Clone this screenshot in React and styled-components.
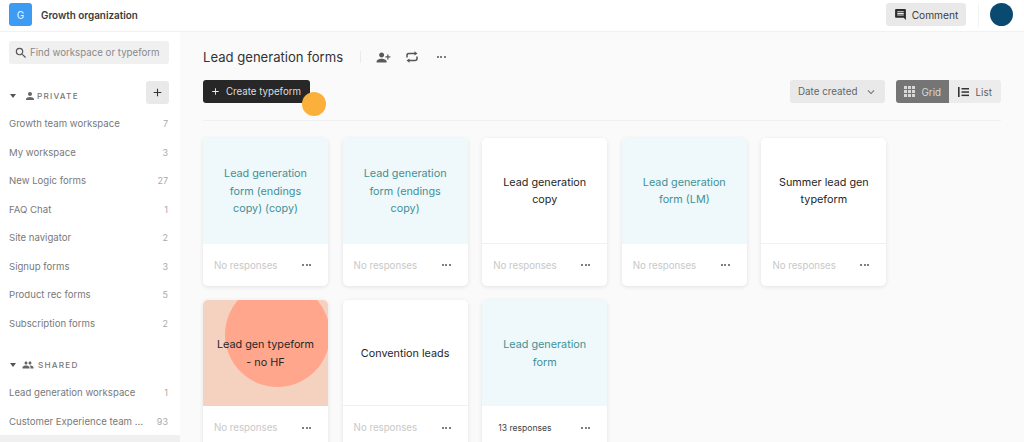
import React from "react";
import styled, { createGlobalStyle } from "styled-components";
import { MdComment, MdPerson, MdPeople, MdPersonAdd, MdSearch, MdAdd, MdKeyboardArrowDown } from "react-icons/md";

const Global = createGlobalStyle`
  html, body { margin: 0; padding: 0; height: 442px; overflow: hidden; background: #fafafa; }
  body { font-family: Inter, "Liberation Sans", sans-serif; color: #262626; }
  * { box-sizing: border-box; }
`;

const Page = styled.div`
  width: 1024px;
  height: 442px;
  overflow: hidden;
  position: relative;
  display: flex;
  flex-direction: column;
`;

const Header = styled.header`
  height: 32px;
  flex: none;
  background: #fff;
  border-bottom: 1px solid #f1f1f1;
  display: flex;
  align-items: center;
  padding: 0 11px 2px 9px;
`;

const Logo = styled.div`
  width: 23px;
  height: 23px;
  border-radius: 3px;
  background: #3d9bf3;
  color: #dcefff;
  font-size: 10px;
  font-weight: 500;
  display: flex;
  align-items: center;
  justify-content: center;
`;

const OrgName = styled.div`
  margin-left: 9px;
  font-size: 9.9px;
  font-weight: 600;
  color: #3a3a3a;
  flex: 1;
`;

const CommentButton = styled.button`
  width: 80px;
  height: 23px;
  border: none;
  border-radius: 3px;
  background: #e9e9e9;
  color: #3d3d3d;
  font: 400 10.2px Inter, sans-serif;
  display: flex;
  align-items: center;
  justify-content: center;
  gap: 5px;
  svg { font-size: 13px; color: #2b2b2b; }
`;

const VSep = styled.div`
  width: 1px;
  height: 24px;
  background: #f3f3f3;
  margin: 0 11px 0 12px;
`;

const Avatar = styled.div`
  width: 23px;
  height: 23px;
  border-radius: 50%;
  background: #0b4a70;
`;

const Body = styled.div`
  flex: 1;
  display: flex;
  min-height: 0;
`;

const Sidebar = styled.aside`
  width: 180px;
  flex: none;
  background: #fff;
  padding: 9px 0 0;
  overflow: hidden;
`;

const Search = styled.div`
  margin: 0 11px 0 9px;
  height: 23px;
  border-radius: 3px;
  background: #f0f0f0;
  color: #8a8a8a;
  font-size: 9.7px;
  display: flex;
  align-items: center;
  gap: 2px;
  padding-left: 5px;
  white-space: nowrap;
  svg { font-size: 14px; color: #555; flex: none; }
`;

const SectionHead = styled.div`
  height: 23px;
  margin: ${(p) => p.$mt}px 11px 0 10px;
  display: flex;
  align-items: center;
`;

const HeadLabel = styled.div`
  display: flex;
  align-items: center;
  padding-top: 6px;
  color: #777;
  font-size: 8.2px;
  font-weight: 500;
  letter-spacing: 1.2px;
`;

const Caret = styled.span`
  width: 0;
  height: 0;
  border-left: 3.5px solid transparent;
  border-right: 3.5px solid transparent;
  border-top: 4px solid #555;
  margin-right: ${(p) => p.$gap}px;
`;

const HeadIcon = styled.span`
  display: flex;
  margin-right: ${(p) => p.$gap}px;
  color: #666;
  font-size: 12px;
`;

const AddButton = styled.button`
  margin-left: auto;
  width: 23px;
  height: 23px;
  border: none;
  border-radius: 3px;
  background: #e9e9e9;
  color: #333;
  display: flex;
  align-items: center;
  justify-content: center;
  padding: 0;
  font-size: 13px;
`;

const Row = styled.div`
  height: 28.5px;
  padding: 0 12px 0 9px;
  display: flex;
  align-items: center;
  justify-content: space-between;
  font-size: 9.6px;
  color: #797979;
  background: ${(p) => (p.$active ? "#f0f0f0" : "transparent")};
  span:last-child { color: #aaa; font-size: 9px; }
`;

const RowList = styled.div`
  margin-top: ${(p) => p.$mt}px;
`;

const Main = styled.main`
  flex: 1;
  min-width: 0;
  padding: 14px 23px 0;
  background: #fafafa;
`;

const TitleRow = styled.div`
  height: 22px;
  display: flex;
  align-items: center;
`;

const Title = styled.h1`
  margin: 0;
  font-size: 13.1px;
  font-weight: 400;
  color: #333;
`;

const TitleSep = styled.div`
  width: 1px;
  height: 12px;
  background: #eaeaea;
  margin: 0 14px 0 17px;
`;

const TitleIcon = styled.span`
  display: flex;
  width: 16px;
  height: 16px;
  align-items: center;
  justify-content: center;
  margin-right: 13px;
  color: #5a5a5a;
  font-size: 15px;
  svg.mirror { transform: scaleX(-1); }
`;

const Dots = styled.span`
  display: flex;
  gap: 1.5px;
  i {
    display: block;
    width: 2px;
    height: 2px;
    border-radius: 50%;
    background: ${(p) => p.$color || "#555"};
  }
`;

const Toolbar = styled.div`
  margin-top: 12px;
  height: 23px;
  display: flex;
  align-items: center;
`;

const CreateButton = styled.button`
  width: 107px;
  height: 23px;
  border: none;
  border-radius: 3px;
  background: #272727;
  color: #ddd;
  font: 400 9.7px Inter, sans-serif;
  display: flex;
  align-items: center;
  justify-content: center;
  gap: 5px;
  padding: 0 8px 0 6px;
  svg { font-size: 11px; color: #eee; }
`;

const Highlight = styled.div`
  position: absolute;
  left: 302px;
  top: 92px;
  width: 24px;
  height: 24px;
  border-radius: 50%;
  background: #fbb03b;
`;

const SortButton = styled.button`
  margin-left: auto;
  width: 95px;
  height: 23px;
  border: none;
  border-radius: 3px;
  background: #e9e9e9;
  color: #666;
  font: 400 9.8px Inter, sans-serif;
  white-space: nowrap;
  display: flex;
  align-items: center;
  justify-content: flex-start;
  gap: 7px;
  padding: 0 0 0 8px;
  svg { font-size: 14px; color: #777; flex: none; }
`;

const Toggle = styled.div`
  margin-left: 11px;
  display: flex;
  border-radius: 3px;
  overflow: hidden;
`;

const ToggleItem = styled.div`
  width: ${(p) => p.$w}px;
  height: 23px;
  background: ${(p) => (p.$active ? "#757575" : "#ececec")};
  color: ${(p) => (p.$active ? "#d8d8d8" : "#5f5f5f")};
  font-size: 9.9px;
  display: flex;
  align-items: center;
  justify-content: center;
  gap: 6.5px;
`;

const Divider = styled.div`
  height: 1px;
  background: #f0f0f0;
  margin-top: 17px;
`;

const Grid = styled.div`
  margin-top: 17px;
  display: grid;
  grid-template-columns: repeat(5, 125px);
  column-gap: 14.6px;
  row-gap: 14.4px;
`;

const Card = styled.article`
  height: 148px;
  border-radius: 5px;
  background: #fff;
  overflow: hidden;
  box-shadow: 0 1px 4px rgba(0, 0, 0, 0.1);
  display: flex;
  flex-direction: column;
`;

const Cover = styled.div`
  height: 105.5px;
  flex: none;
  position: relative;
  overflow: hidden;
  background: ${(p) => (p.$kind === "teal" ? "#eff8fa" : p.$kind === "peach" ? "#f5d2bf" : "#fff")};
  border-bottom: 1px solid ${(p) => (p.$kind === "plain" ? "#f0f0f0" : "transparent")};
  color: ${(p) => (p.$kind === "teal" ? "#3f9198" : "#262626")};
  display: flex;
  align-items: center;
  justify-content: center;
  padding: 2px 10px 0;
  text-align: center;
  font-size: 10.8px;
  line-height: 17.2px;
`;

const Blob = styled.div`
  position: absolute;
  left: 22px;
  top: -18px;
  width: 105px;
  height: 105px;
  border-radius: 50%;
  background: #ffa68d;
`;

const CoverText = styled.span`
  position: relative;
`;

const Footer = styled.div`
  flex: 1;
  display: flex;
  align-items: center;
  justify-content: space-between;
  padding: 1px 17px 0 ${(p) => (p.$has ? "16px" : "11px")};
  font-size: ${(p) => (p.$has ? "8.6px" : "9.7px")};
  color: ${(p) => (p.$has ? "#444" : "#c8c8c8")};
`;

const Repeat = () => (
  <svg width="14" height="14" viewBox="0 0 14 14" fill="none" stroke="#555" strokeWidth="1.5">
    <path d="M2 7.5V5.2C2 4 2.8 3.5 4 3.5H10" />
    <path d="M9.5 1.2L12.5 3.5L9.5 5.4Z" fill="#555" stroke="none" />
    <path d="M12 6.5V8.8C12 10 11.2 10.5 10 10.5H4" />
    <path d="M4.5 8.6L1.5 10.5L4.5 12.8Z" fill="#555" stroke="none" />
  </svg>
);

const GridIcon = () => (
  <svg width="11" height="11" viewBox="0 0 11 11" fill="#d8d8d8">
    {[0, 4, 8].flatMap((x) =>
      [0, 4, 8].map((y) => <rect key={`${x}${y}`} x={x} y={y} width="3" height="3" />)
    )}
  </svg>
);

const ListIcon = () => (
  <svg width="11" height="10" viewBox="0 0 11 10" fill="#333">
    <rect x="0" y="0" width="1.6" height="10" />
    <rect x="3.5" y="1" width="7.5" height="1.5" />
    <rect x="3.5" y="4.3" width="7.5" height="1.5" />
    <rect x="3.5" y="7.6" width="7.5" height="1.5" />
  </svg>
);

const ThreeDots = ({ color }) => (
  <Dots $color={color}>
    <i />
    <i />
    <i />
  </Dots>
);

const privateRows = [
  ["Growth team workspace", 7],
  ["My workspace", 3],
  ["New Logic forms", 27],
  ["FAQ Chat", 1],
  ["Site navigator", 2],
  ["Signup forms", 3],
  ["Product rec forms", 5],
  ["Subscription forms", 2],
];

const sharedRows = [
  ["Lead generation workspace", 1],
  ["Customer Experience team ...", 93],
];

const cards = [
  { kind: "teal", lines: ["Lead generation", "form (endings", "copy) (copy)"] },
  { kind: "teal", lines: ["Lead generation", "form (endings", "copy)"] },
  { kind: "plain", lines: ["Lead generation", "copy"] },
  { kind: "teal", lines: ["Lead generation", "form (LM)"] },
  { kind: "plain", lines: ["Summer lead gen", "typeform"] },
  { kind: "peach", lines: ["Lead gen typeform", "- no HF"] },
  { kind: "plain", lines: ["Convention leads"] },
  { kind: "teal", lines: ["Lead generation", "form"], responses: "13 responses" },
];

export default function App() {
  return (
    <Page>
      <Global />
      <Header>
        <Logo>G</Logo>
        <OrgName>Growth organization</OrgName>
        <CommentButton>
          <MdComment />
          Comment
        </CommentButton>
        <VSep />
        <Avatar />
      </Header>
      <Body>
        <Sidebar>
          <Search>
            <MdSearch />
            Find workspace or typeform
          </Search>
          <SectionHead $mt={17}>
            <HeadLabel>
              <Caret $gap={8} />
              <HeadIcon $gap={1}><MdPerson /></HeadIcon>
              PRIVATE
            </HeadLabel>
            <AddButton><MdAdd /></AddButton>
          </SectionHead>
          <RowList $mt={5.4}>
            {privateRows.map(([name, n]) => (
              <Row key={name}>
                <span>{name}</span>
                <span>{n}</span>
              </Row>
            ))}
          </RowList>
          <SectionHead $mt={13.4}>
            <HeadLabel>
              <Caret $gap={6} />
              <HeadIcon $gap={4}><MdPeople /></HeadIcon>
              SHARED
            </HeadLabel>
          </SectionHead>
          <RowList $mt={4.6}>
            {sharedRows.map(([name, n]) => (
              <Row key={name}>
                <span>{name}</span>
                <span>{n}</span>
              </Row>
            ))}
            <Row $active />
          </RowList>
        </Sidebar>
        <Main>
          <TitleRow>
            <Title>Lead generation forms</Title>
            <TitleSep />
            <TitleIcon><MdPersonAdd className="mirror" /></TitleIcon>
            <TitleIcon><Repeat /></TitleIcon>
            <TitleIcon><ThreeDots /></TitleIcon>
          </TitleRow>
          <Toolbar>
            <CreateButton>
              <MdAdd />
              Create typeform
            </CreateButton>
            <SortButton>
              Date created
              <MdKeyboardArrowDown />
            </SortButton>
            <Toggle>
              <ToggleItem $active $w={53}>
                <GridIcon />
                Grid
              </ToggleItem>
              <ToggleItem $w={52}>
                <ListIcon />
                List
              </ToggleItem>
            </Toggle>
          </Toolbar>
          <Divider />
          <Grid>
            {cards.map((c, i) => (
              <Card key={i}>
                <Cover $kind={c.kind}>
                  {c.kind === "peach" && <Blob />}
                  <CoverText>
                    {c.lines.map((l, j) => (
                      <React.Fragment key={j}>
                        {j > 0 && <br />}
                        {l}
                      </React.Fragment>
                    ))}
                  </CoverText>
                </Cover>
                <Footer $has={!!c.responses}>
                  {c.responses || "No responses"}
                  <ThreeDots color="#555" />
                </Footer>
              </Card>
            ))}
          </Grid>
        </Main>
      </Body>
      <Highlight />
    </Page>
  );
}
